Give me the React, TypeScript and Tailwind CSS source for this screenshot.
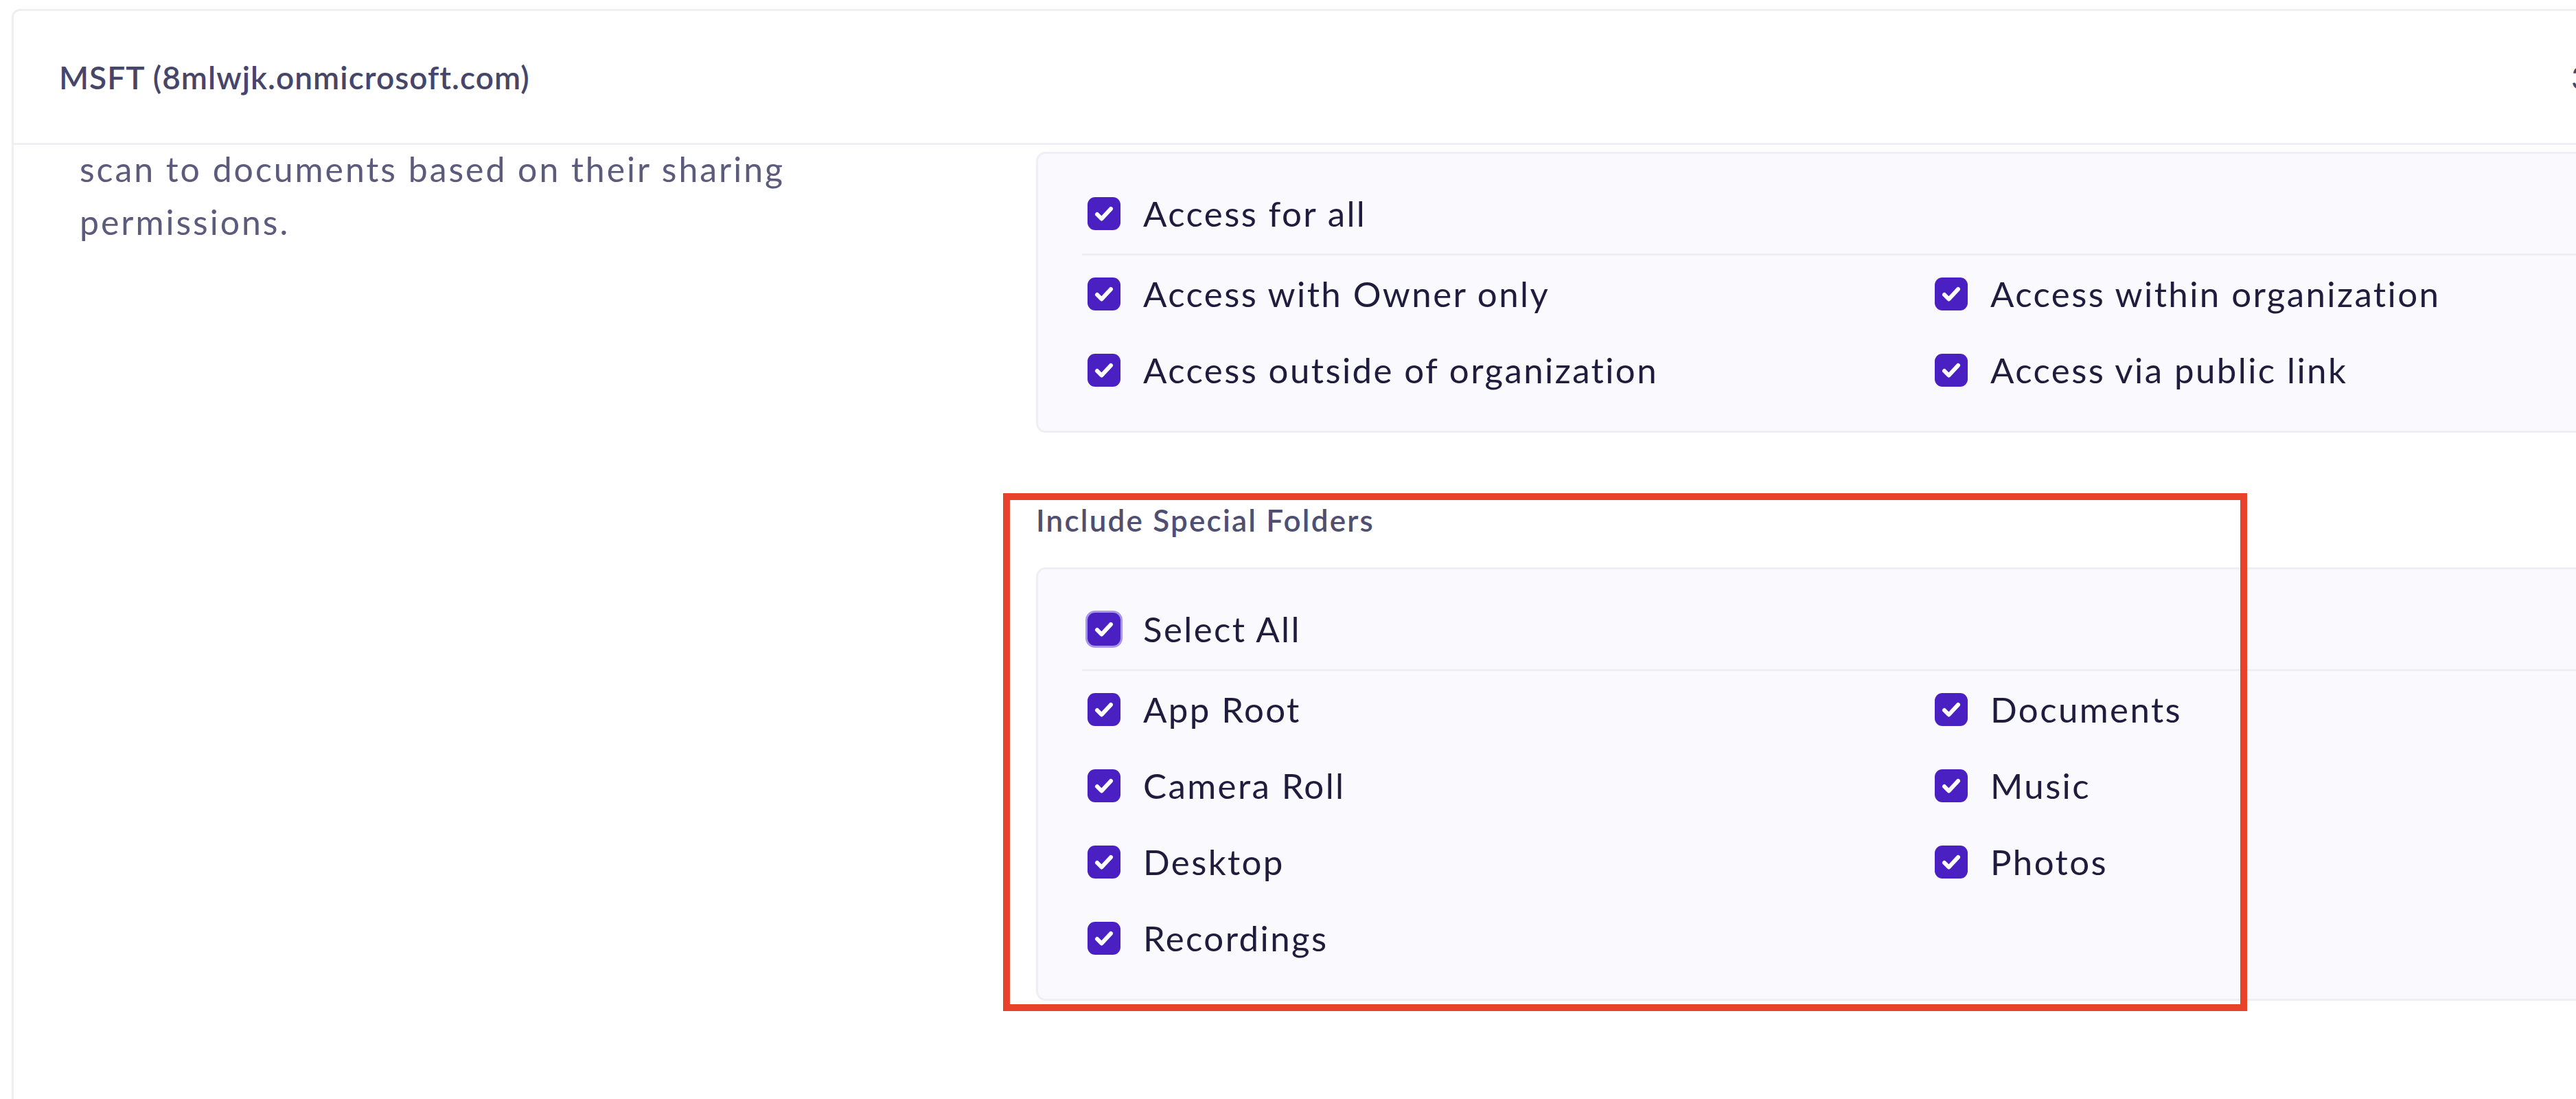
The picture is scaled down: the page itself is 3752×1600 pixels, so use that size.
import React from 'react';

type Item = { label: string; focused?: boolean };

const accessHead: Item = { label: 'Access for all' };
const accessItems: Item[] = [
  { label: 'Access with Owner only' },
  { label: 'Access within organization' },
  { label: 'Access outside of organization' },
  { label: 'Access via public link' },
];

const foldersHead: Item = { label: 'Select All', focused: true };
const folderItems: Item[] = [
  { label: 'App Root' },
  { label: 'Documents' },
  { label: 'Camera Roll' },
  { label: 'Music' },
  { label: 'Desktop' },
  { label: 'Photos' },
  { label: 'Recordings' },
];

const CheckBox: React.FC<{ focused?: boolean }> = ({ focused }) => (
  <span
    className={`flex h-[48px] w-[48px] shrink-0 items-center justify-center rounded-[11px] bg-[#4b20c3] ${
      focused ? 'ring-[3px] ring-[#a896e8]' : ''
    }`}
  >
    <svg
      viewBox="0 0 48 48"
      className="h-[48px] w-[48px]"
      fill="none"
      stroke="white"
      strokeWidth={6}
      strokeLinecap="round"
      strokeLinejoin="round"
    >
      <path d="M14 25l6.5 6.5L34 17" />
    </svg>
  </span>
);

const Option: React.FC<Item> = ({ label, focused }) => (
  <label className="flex h-[58px] items-center gap-[33px] pl-2">
    <CheckBox focused={focused} />
    <span className="text-[51px] leading-[58px] tracking-[2.4px] text-[#1f1c3d]">{label}</span>
  </label>
);

const OptionBox: React.FC<{ head: Item; items: Item[] }> = ({ head, items }) => (
  <div className="rounded-[14px] border-[3px] border-[#eeeef4] bg-[#fafafe] pt-[58px] pb-[59px] pl-[64px]">
    <Option {...head} />
    <div className="mt-[29px] mb-[27px] h-[3px] bg-[#efeff4]" />
    <div className="grid grid-cols-[1234px_1fr] gap-y-[53px]">
      {items.map((item) => (
        <Option key={item.label} {...item} />
      ))}
    </div>
  </div>
);

export default function App() {
  return (
    <div className="relative h-[1600px] w-[3752px] overflow-hidden bg-white font-['Lato',sans-serif]">
      <div className="ml-[17px] mt-[13px] h-[1700px] w-[4300px] rounded-[12px] border-[3px] border-[#eeeef3] bg-white">
        <div className="flex h-[195px] items-center border-b-[3px] border-[#eeeef3] pl-[66px]">
          <span className="w-[3659px] shrink-0 text-[46px] font-semibold tracking-[1px] text-[#46466a]">
            MSFT (8mlwjk.onmicrosoft.com)
          </span>
          <span className="text-[46px] text-[#46466a]">3</span>
        </div>

        <div className="flex">
          <div className="w-[1489px] shrink-0 pl-[96px]">
            <p className="-mt-[3px] max-w-[1120px] text-[50px] leading-[77px] tracking-[2.95px] text-[#5d5b7c]">
              scan to documents based on their sharing permissions.
            </p>
          </div>

          <div className="flex-1 pt-[10px] pr-[68px]">
            <OptionBox head={accessHead} items={accessItems} />

            <div className="mt-[101px] mb-[42px] text-[44px] font-semibold leading-[53px] tracking-[2.2px] text-[#4f4f72]">
              Include Special Folders
            </div>

            <OptionBox head={foldersHead} items={folderItems} />
          </div>
        </div>
      </div>

      <div className="absolute left-[1461px] top-[718px] h-[754px] w-[1812px] border-[10px] border-[#e9422a]" />
    </div>
  );
}
